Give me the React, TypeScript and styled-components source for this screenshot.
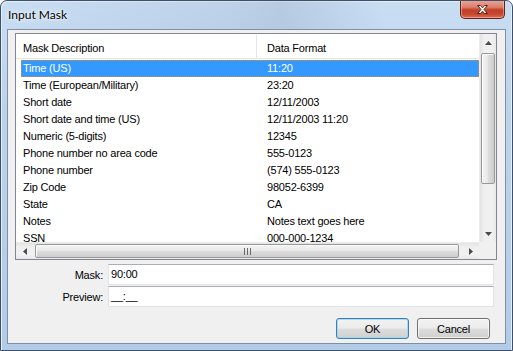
import React from 'react';
import styled, { createGlobalStyle } from 'styled-components';

const GlobalStyle = createGlobalStyle`
  html, body { margin: 0; padding: 0; background: #ffffff; }
  body { font-family: "Liberation Sans", Arial, sans-serif; font-size: 11px; letter-spacing: -0.2px; color: #000; }
  * { box-sizing: border-box; }
`;

const Window = styled.div`
  width: 513px;
  height: 351px;
  display: flex;
  flex-direction: column;
  border: 1px solid #3d5068;
  border-radius: 7px 7px 0 0;
  background: linear-gradient(180deg, #c9def3 0%, #bcd3ec 30%, #b2cbe7 100%);
  box-shadow: inset 1px 1px 0 #e4eff9, inset -1px 0 0 #e4eff9;
  overflow: hidden;
`;

const TitleBar = styled.div`
  height: 28px;
  display: flex;
  align-items: flex-start;
  justify-content: space-between;
  padding: 0 7px 0 7px;
  background: linear-gradient(90deg, rgba(255,255,255,0) 0%, rgba(90,110,140,0.10) 45%, rgba(90,110,140,0.16) 55%, rgba(255,255,255,0) 75%);
`;

const Title = styled.div`
  font-family: Lato, "Noto Sans", sans-serif;
  font-size: 12px;
  letter-spacing: 0;
  line-height: 28px;
  color: #000;
  text-shadow: 0 0 6px #ffffff, 0 0 3px #ffffff;
`;

const CloseButton = styled.div`
  width: 45px;
  height: 19px;
  margin-top: -1px;
  display: flex;
  align-items: center;
  justify-content: center;
  border: 1px solid #5e2418;
  border-top: none;
  border-radius: 0 0 5px 5px;
  background: linear-gradient(180deg, #e9a99b 0%, #dc7e6a 40%, #c2402a 55%, #c8472f 80%, #dc7158 100%);
  box-shadow: inset 0 0 0 1px rgba(255,220,210,0.45);
`;

const Client = styled.div`
  flex: 1;
  margin: 0 6px 6px 6px;
  border: 1px solid #7f8fa4;
  background: #f0f0f0;
  display: flex;
  flex-direction: column;
`;

const ListView = styled.div`
  margin: 3px 8px 0 7px;
  height: 227px;
  border: 1px solid #828790;
  background: #ffffff;
  display: grid;
  grid-template-columns: 1fr 17px;
  grid-template-rows: 1fr 17px;
`;

const Content = styled.div`
  overflow: hidden;
  display: flex;
  flex-direction: column;
`;

const Header = styled.div`
  height: 25px;
  display: flex;
  border-bottom: 1px solid #e5e5e5;
  background: #ffffff;
`;

const HeaderCell = styled.div<{ $w?: number }>`
  ${(p) => (p.$w ? `width: ${p.$w}px;` : 'flex: 1;')}
  padding: 3px 0 0 ${(p) => (p.$w ? 7 : 10)}px;
  line-height: 20px;
  border-right: ${(p) => (p.$w ? '1px solid #e5e5e5' : 'none')};
  margin: 1px 0 0 0;
`;

const Body = styled.div`
  padding: 1px 0 0 5px;
  display: flex;
  flex-direction: column;
`;

const Row = styled.div<{ $selected?: boolean }>`
  height: 17px;
  display: flex;
  align-items: flex-start;
  padding-left: 2px;
  white-space: nowrap;
  color: ${(p) => (p.$selected ? '#ffffff' : '#000000')};
  background: ${(p) => (p.$selected ? '#3399ff' : 'transparent')};
  outline: ${(p) => (p.$selected ? '1px dotted #e08a2e' : 'none')};
  outline-offset: -1px;
`;

const Cell = styled.div<{ $w?: number }>`
  ${(p) => (p.$w ? `width: ${p.$w}px;` : 'flex: 1;')}
  line-height: 16px;
`;

const VScroll = styled.div`
  display: flex;
  flex-direction: column;
  background: linear-gradient(90deg, #e3e3e3 0%, #efefef 25%, #f1f1f1 75%, #e8e8e8 100%);
  border-left: 1px solid #ececec;
`;

const HScroll = styled.div`
  display: flex;
  flex-direction: row;
  background: linear-gradient(180deg, #e3e3e3 0%, #efefef 25%, #f1f1f1 75%, #e8e8e8 100%);
  border-top: 1px solid #ececec;
`;

const Corner = styled.div`
  background: #f0f0f0;
`;

const ArrowButton = styled.div`
  width: 17px;
  height: 17px;
  flex: 0 0 17px;
  display: flex;
  align-items: center;
  justify-content: center;
`;

const VThumb = styled.div`
  margin: 2px 1px 0 1px;
  height: 131px;
  border: 1px solid #999999;
  border-radius: 2px;
  background: linear-gradient(90deg, #f4f4f4 0%, #e9e9e9 45%, #dcdcdc 55%, #cdcdcd 100%);
  box-shadow: inset 1px 1px 0 #fbfbfb;
`;

const VTrack = styled.div`
  flex: 1;
  display: flex;
  flex-direction: column;
`;

const HThumb = styled.div`
  flex: 1;
  margin: 1px 3px 1px 2px;
  border: 1px solid #999999;
  border-radius: 2px;
  background: linear-gradient(180deg, #f4f4f4 0%, #e9e9e9 45%, #dcdcdc 55%, #cdcdcd 100%);
  box-shadow: inset 1px 1px 0 #fbfbfb;
  display: flex;
  align-items: center;
  justify-content: center;
`;

const Form = styled.div`
  margin-top: 4px;
  display: flex;
  flex-direction: column;
  gap: 1px;
`;

const FieldRow = styled.div`
  display: flex;
  align-items: center;
  gap: 5px;
`;

const Label = styled.div`
  width: 95px;
  text-align: right;
`;

const TextBox = styled.div`
  width: 386px;
  height: 21px;
  border: 1px solid #e2e3ea;
  border-top-color: #abadb3;
  background: #ffffff;
  padding-left: 2px;
  line-height: 19px;
  white-space: pre;
`;

const ButtonRow = styled.div`
  margin-top: 11px;
  padding-right: 15px;
  display: flex;
  justify-content: flex-end;
  gap: 8px;
`;

const Button = styled.div<{ $default?: boolean }>`
  width: 73px;
  height: 21px;
  border: 1px solid ${(p) => (p.$default ? '#3c7fb1' : '#707070')};
  border-radius: 3px;
  background: linear-gradient(180deg, #f2f2f2 0%, #ebebeb 48%, #dddddd 52%, #cfcfcf 100%);
  box-shadow: inset 0 0 0 1px ${(p) => (p.$default ? 'rgba(160,215,245,0.9)' : 'rgba(255,255,255,0.7)')};
  display: flex;
  align-items: center;
  justify-content: center;
`;

const Tri = ({ dir }: { dir: 'up' | 'down' | 'left' | 'right' }) => {
  const pts = {
    up: '0,4 7,4 3.5,0',
    down: '0,0 7,0 3.5,4',
    left: '4,0 4,7 0,3.5',
    right: '0,0 0,7 4,3.5',
  }[dir];
  const vertical = dir === 'up' || dir === 'down';
  return (
    <svg width={vertical ? 7 : 4} height={vertical ? 4 : 7} viewBox={vertical ? '0 0 7 4' : '0 0 4 7'}>
      <polygon points={pts} fill="#4b4b4b" />
    </svg>
  );
};

const Grip = () => (
  <svg width="7" height="7" viewBox="0 0 7 7">
    <rect x="0" y="0" width="1" height="7" fill="#6a6a6a" />
    <rect x="3" y="0" width="1" height="7" fill="#6a6a6a" />
    <rect x="6" y="0" width="1" height="7" fill="#6a6a6a" />
  </svg>
);

const CloseGlyph = () => (
  <svg width="13" height="11" viewBox="0 0 13 11">
    <path
      d="M1.5,1.5 L4.5,1.5 L6.5,3.8 L8.5,1.5 L11.5,1.5 L8,5.5 L11.5,9.5 L8.5,9.5 L6.5,7.2 L4.5,9.5 L1.5,9.5 L5,5.5 Z"
      fill="#ffffff"
      stroke="#5a1f15"
      strokeWidth="1"
      strokeLinejoin="round"
    />
  </svg>
);

const rows: [string, string][] = [
  ['Time (US)', '11:20'],
  ['Time (European/Military)', '23:20'],
  ['Short date', '12/11/2003'],
  ['Short date and time (US)', '12/11/2003 11:20'],
  ['Numeric (5-digits)', '12345'],
  ['Phone number no area code', '555-0123'],
  ['Phone number', '(574) 555-0123'],
  ['Zip Code', '98052-6399'],
  ['State', 'CA'],
  ['Notes', 'Notes text goes here'],
  ['SSN', '000-000-1234'],
];

export default function App() {
  return (
    <>
      <GlobalStyle />
      <Window>
        <TitleBar>
          <Title>Input Mask</Title>
          <CloseButton>
            <CloseGlyph />
          </CloseButton>
        </TitleBar>
        <Client>
          <ListView>
            <Content>
              <Header>
                <HeaderCell $w={241}>Mask Description</HeaderCell>
                <HeaderCell>Data Format</HeaderCell>
              </Header>
              <Body>
                {rows.map(([a, b], i) => (
                  <Row key={a} $selected={i === 0}>
                    <Cell $w={244}>{a}</Cell>
                    <Cell>{b}</Cell>
                  </Row>
                ))}
              </Body>
            </Content>
            <VScroll>
              <ArrowButton>
                <Tri dir="up" />
              </ArrowButton>
              <VTrack>
                <VThumb />
              </VTrack>
              <ArrowButton>
                <Tri dir="down" />
              </ArrowButton>
            </VScroll>
            <HScroll>
              <ArrowButton>
                <Tri dir="left" />
              </ArrowButton>
              <HThumb>
                <Grip />
              </HThumb>
              <ArrowButton>
                <Tri dir="right" />
              </ArrowButton>
            </HScroll>
            <Corner />
          </ListView>
          <Form>
            <FieldRow>
              <Label>Mask:</Label>
              <TextBox>90:00</TextBox>
            </FieldRow>
            <FieldRow>
              <Label>Preview:</Label>
              <TextBox>__:__</TextBox>
            </FieldRow>
          </Form>
          <ButtonRow>
            <Button $default>OK</Button>
            <Button>Cancel</Button>
          </ButtonRow>
        </Client>
      </Window>
    </>
  );
}
